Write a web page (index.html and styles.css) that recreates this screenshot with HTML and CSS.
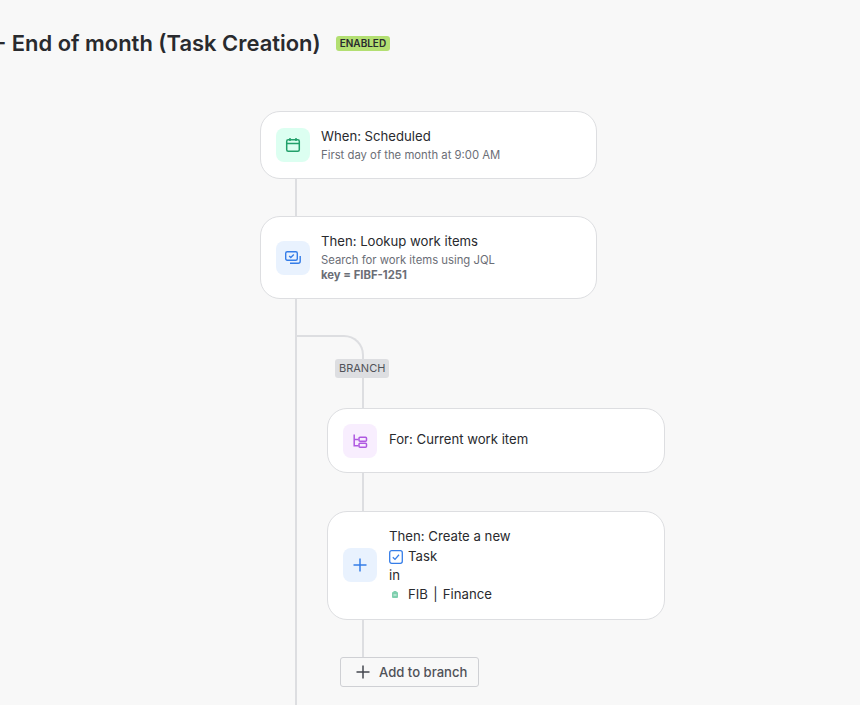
FILE: index.html
```html
<!DOCTYPE html>
<html lang="en">
<head>
  <meta charset="UTF-8">
  <meta name="viewport" content="width=device-width, initial-scale=1.0">
  <title>End of month (Task Creation)</title>
  <link rel="stylesheet" href="styles.css">
</head>
<body>

  <div class="page">
    <div class="header">
      <h1>- End of month (Task Creation)</h1>
      <span class="status">ENABLED</span>
    </div>

    <div class="flow">
      <div class="card card-trigger">
        <div class="tile tile-green">
          <svg width="16" height="16" viewBox="0 0 16 16" fill="none" stroke="#22a06b" stroke-width="1.5">
            <rect x="1.7" y="2.7" width="12.6" height="11.6" rx="1.5"/>
            <path d="M1.7 6.5h12.6M5 1v3M11 1v3"/>
          </svg>
        </div>
        <div class="card-text">
          <div class="card-title">When: Scheduled</div>
          <div class="card-sub">First day of the month at 9:00 AM</div>
        </div>
      </div>

      <div class="card card-lookup">
        <div class="tile tile-blue">
          <svg width="16" height="16" viewBox="0 0 16 16" fill="none" stroke="#357de8" stroke-width="1.4">
            <rect x="0.7" y="1.7" width="11.6" height="8.6" rx="1.5"/>
            <path d="M4.2 6l1.6 1.6 3-3"/>
            <path d="M15.2 6v5.3a2 2 0 0 1-2 2H5"/>
          </svg>
        </div>
        <div class="card-text">
          <div class="card-title">Then: Lookup work items</div>
          <div class="card-sub">Search for work items using JQL</div>
          <div class="card-sub card-key">key = FIBF-1251</div>
        </div>
      </div>

      <div class="branch">
        <div class="elbow"></div>
        <span class="branch-label">BRANCH</span>
        <div class="line line-badge"></div>

        <div class="card card-for">
          <div class="tile tile-purple">
            <svg width="16" height="16" viewBox="0 0 16 16" fill="none" stroke="#af59e1" stroke-width="1.5">
              <path d="M2.2 1.5v11.3h4.3M2.2 6.5h4.3"/>
              <rect x="7" y="4.2" width="7.5" height="4" rx="1"/>
              <rect x="7" y="10.2" width="7.5" height="4" rx="1"/>
            </svg>
          </div>
          <div class="card-title">For: Current work item</div>
        </div>

        <div class="line line-cards"></div>

        <div class="card card-create">
          <div class="tile tile-blue">
            <svg width="16" height="16" viewBox="0 0 16 16" fill="none" stroke="#357de8" stroke-width="1.5">
              <path d="M8 1.5v13M1.5 8h13"/>
            </svg>
          </div>
          <div class="card-text card-rows">
            <div class="row-first">Then: Create a new</div>
            <div class="with-icon">
              <span class="row-icon">
                <svg width="14" height="14" viewBox="0 0 14 14" fill="none" stroke="#357de8" stroke-width="1.3">
                  <rect x="0.7" y="0.7" width="12.6" height="12.6" rx="2"/>
                  <path d="M3.8 7.2l2.2 2.2 4-4.6"/>
                </svg>
              </span>
              Task
            </div>
            <div>in</div>
            <div class="with-icon row-project">
              <span class="row-icon">
                <svg class="project-icon" width="6" height="7" viewBox="0 0 6 7">
                  <rect x="0" y="1" width="6" height="6" rx="1" fill="#7fcfae"/>
                  <rect x="1.5" y="0" width="3" height="2" fill="#7fcfae"/>
                  <rect x="1.5" y="3.5" width="3" height="1" fill="#e6f7ef"/>
                </svg>
              </span>
              FIB | Finance
            </div>
          </div>
        </div>

        <div class="line line-add"></div>

        <button class="add-btn">
          <svg width="16" height="16" viewBox="0 0 16 16" fill="none" stroke="#44474f" stroke-width="1.5">
            <path d="M8 1.5v13M1.5 8h13"/>
          </svg>
          Add to branch
        </button>
      </div>
    </div>
  </div>

</body>
</html>
```

FILE: styles.css
```css
html, body {
  margin: 0;
  padding: 0;
}

body {
  font-family: Inter, "Noto Sans", sans-serif;
  background-color: #f8f8f8;
  color: #292a2e;
}

.page {
  height: 705px;
  overflow: hidden;
}

.header {
  display: flex;
  align-items: center;
  height: 30px;
  padding-top: 28px;
  margin-left: -4px;
}

.header h1 {
  margin: 0;
  font-size: 21.95px;
  font-weight: 600;
  line-height: 30px;
  white-space: nowrap;
}

.status {
  margin-left: 15px;
  padding: 0 4px;
  height: 15px;
  line-height: 15px;
  font-size: 10px;
  font-weight: 600;
  background-color: #b3df72;
  border-radius: 3px;
}

/* trunk line runs from the first card to the bottom of the page */
.flow {
  position: relative;
  margin: 53px 0 0 260px;
  width: 337px;
  height: 594px;
}

.flow::before {
  content: "";
  position: absolute;
  left: 35px;
  top: 60px;
  bottom: 0;
  width: 2px;
  background-color: #dddee1;
}

.card {
  position: relative;
  display: flex;
  align-items: center;
  box-sizing: border-box;
  width: 337px;
  padding: 0 15px;
  background-color: #fff;
  border: 1px solid #dddee1;
  border-radius: 20px;
}

.card-trigger {
  height: 68px;
  margin-bottom: 37px;
}

.card-lookup {
  height: 83px;
}

.tile {
  flex: none;
  display: flex;
  align-items: center;
  justify-content: center;
  width: 34px;
  height: 34px;
  margin-right: 11px;
  border-radius: 8px;
}

.tile-green {
  background-color: #dcfff1;
}

.tile-blue {
  background-color: #e9f2fe;
}

.tile-purple {
  background-color: #f8eefe;
}

.card-title {
  font-size: 13.15px;
  line-height: 18px;
}

.card-sub {
  font-size: 11.3px;
  line-height: 15px;
  color: #6b6e76;
}

.card-title + .card-sub {
  margin-top: 3px;
}

.card-key {
  font-weight: 700;
}

.branch {
  display: flex;
  flex-direction: column;
  align-items: flex-start;
  margin-left: 67px;
  margin-top: 36px;
}

.elbow {
  box-sizing: border-box;
  width: 69px;
  height: 24px;
  margin-left: -32px;
  border-top: 2px solid #dddee1;
  border-right: 2px solid #dddee1;
  border-top-right-radius: 20px;
}

.branch-label {
  box-sizing: border-box;
  height: 19px;
  margin-left: 8px;
  padding: 0 4px;
  line-height: 19px;
  font-size: 11px;
  color: #505258;
  background-color: #dddee1;
  border-radius: 3px;
}

.line {
  width: 2px;
  margin-left: 35px;
  background-color: #dddee1;
}

.line-badge {
  height: 30px;
}

.line-cards {
  height: 38px;
}

.line-add {
  height: 37px;
}

.card-for {
  height: 65px;
  width: 338px;
}

.card-for .tile {
  margin-right: 12px;
}

.card-for .card-title {
  margin-bottom: 4px;
}

.card-create {
  height: 109px;
  width: 338px;
}

.card-create .tile {
  margin-right: 12px;
  margin-bottom: 2px;
}

.card-rows {
  font-size: 13.2px;
  line-height: 19px;
}

.row-first {
  margin-bottom: 1px;
}

.row-project {
  word-spacing: 1.5px;
}

.project-icon {
  margin-right: 2px;
}

.with-icon {
  display: flex;
  align-items: center;
}

.row-icon {
  display: flex;
  justify-content: center;
  width: 14px;
  margin-right: 5px;
}

.add-btn {
  display: flex;
  align-items: center;
  gap: 8px;
  box-sizing: border-box;
  height: 30px;
  width: 139px;
  margin-left: 13px;
  padding: 0 10px 0 14px;
  font-family: inherit;
  font-size: 13.1px;
  font-weight: 500;
  color: #505258;
  background-color: #f8f8f8;
  border: 1px solid #cfd0d4;
  border-radius: 3px;
}
```
